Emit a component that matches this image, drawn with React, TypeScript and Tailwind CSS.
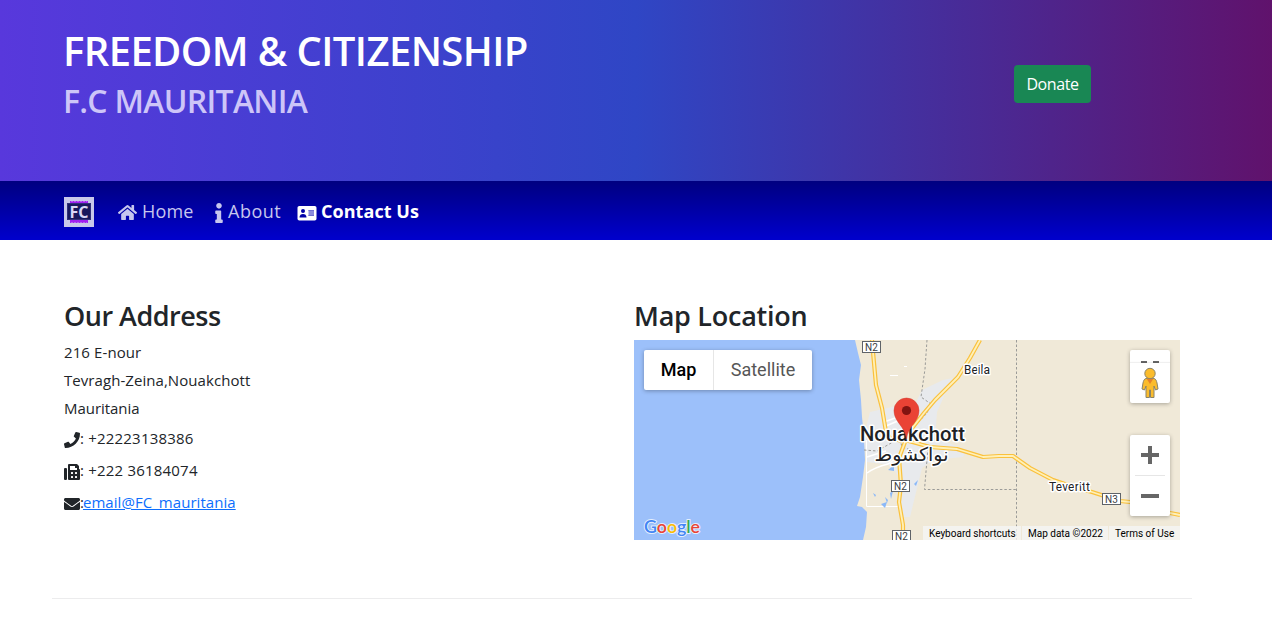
import { FaEnvelope, FaFax, FaHome, FaInfo, FaPhone } from "react-icons/fa";

function Logo() {
  return (
    <svg viewBox="0 0 30 30" className="h-[30px] w-[30px] shrink-0" aria-label="FC">
      <rect width="30" height="30" fill="#c8c8ea" />
      <rect x="6" y="4" width="18" height="3" fill="#a020f0" />
      <path d="M7 4.500h16" stroke="#b860f0" strokeDasharray="2 1" />
      <rect x="6" y="23" width="18" height="3" fill="#a020f0" />
      <path d="M7 25.500h16" stroke="#b860f0" strokeDasharray="2 1" />
      <rect x="3.5" y="6.5" width="23" height="16" fill="#18185c" stroke="#30307a" />
      <text x="15" y="20.500" textAnchor="middle" textLength="19" lengthAdjust="spacingAndGlyphs" fontSize="16.500" fontWeight="700" fill="#d8d8f6" className="font-['Open_Sans',sans-serif]">FC</text>
    </svg>
  );
}

function ContactCard() {
  return (
    <svg viewBox="0 0 20 20" className="mt-px h-5 w-5 shrink-0">
      <rect x="0.500" y="3" width="19" height="14.500" rx="1.800" fill="#fff" />
      <circle cx="6" cy="8" r="2" fill="#0000a8" />
      <path d="M2.500 14.500C2.500 12 4 11 6 11S9.500 12 9.500 14.500Z" fill="#0000a8" />
      <rect x="11.500" y="7" width="5.500" height="6" fill="#8c8cdc" />
      <path d="M11.500 7.500H17M11.500 12.500H17" stroke="#7070d0" />
    </svg>
  );
}

const roads = [
  "M238 0L239 12L242 45L248 68L252 92L256 98L268 101",
  "M346 0L336 18L324 37L312 49L301 60L290 73L279 87L271 102L265 118L267 145L265 162L269 185L269 200",
  "M271 100L282 103L296 107L323 109L349 117L365 116L379 116L386 121L396 128L419 140L440 147L458 152L486 161L496 162L515 167L536 173L546 175",
];

function Shield({ x, y, label }: { x: number; y: number; label: string }) {
  return (
    <g>
      <rect x={x + 0.5} y={y + 0.5} width="18" height="11" fill="#fff" stroke="#5f6368" />
      <text x={x + 9.5} y={y + 9.5} textAnchor="middle" fontSize="10" fill="#3c4043">{label}</text>
    </g>
  );
}

function MapDrawing() {
  return (
    <svg viewBox="0 0 546 200" className="block h-[200px] w-[546px] font-[Roboto,sans-serif]">
      <rect width="546" height="200" fill="#f0e9d8" />
      <path d="M0 0H221L224 13L227 25L225 40L227 60L228 77L230 97L231 120L229 137L226 157L223 166L228 167L233 172L232 187L229 200H0Z" fill="#9cc0fa" />
      <path d="M236 72L258 67L282 62L288 50L309 40L319 38L312 52L303 72L301 98L333 110L329 117L299 120L288 128L276 177L266 177L266 138L256 125L233 122L229 92L232 88Z" fill="#e8eaed" />
      <g fill="none" stroke="#fff" strokeWidth="1.5">
        <path d="M232.500 100V166.500H264" strokeWidth="1" />
        <path d="M233 133C240 128 246 126 254 124L264 117M233 117L252 111M250 82L264 77M252 86L266 80" />
        <path d="M256 35.500H264M270 26.500H273" strokeWidth="1" />
      </g>
      <path d="M254 130L260 125V131ZM239 153L242 155L241 157ZM247 164L253 162L251 168ZM256 153L259 151L257 159ZM280 144L284 140L282 146ZM251 157L254 160L253 163Z" fill="#8ab8f8" />
      <g fill="none" stroke="#9b9b98" strokeWidth="1" strokeDasharray="2.500 2">
        <path d="M293 0L291 29L287 57L297 64L293 73L280 87L266 99L268 107L277 110" />
        <path d="M230 110L243 111L259 102M294 108L290.500 149.500H382" />
        <path d="M382.500 0V200" />
      </g>
      {roads.map((d) => (
        <g key={d} fill="none" strokeLinejoin="round">
          <path d={d} stroke="#fac13c" strokeWidth="4.200" />
          <path d={d} stroke="#fff0b8" strokeWidth="1.800" />
        </g>
      ))}
      <Shield x={228} y={1} label="N2" />
      <Shield x={257} y={140} label="N2" />
      <Shield x={258} y={190} label="N2" />
      <Shield x={468} y={153} label="N3" />
      <g stroke="#fff" strokeWidth="3" paintOrder="stroke" strokeLinejoin="round" fill="#202124">
        <text x="330" y="34" fontSize="12" textLength="26">Beila</text>
        <text x="415" y="151" fontSize="12" textLength="41">Teveritt</text>
        <text x="226" y="101" fontSize="20" fontWeight="500" textLength="105" lengthAdjust="spacingAndGlyphs">Nouakchott</text>
        <text x="277.500" y="121" fontSize="19" textAnchor="middle" textLength="74" lengthAdjust="spacingAndGlyphs" className="font-['DejaVu_Sans',sans-serif]">نواكشوط</text>
      </g>
      <path d="M272.500 99C271 86 260 82 260 70.500A12.500 12.500 0 0 1 285 70.500C285 82 274 86 272.500 99Z" fill="#ea4335" stroke="#d33b2f" strokeWidth=".5" />
      <circle cx="272.500" cy="70.500" r="4.600" fill="#811411" />
      <g fontSize="18" fontWeight="600" stroke="#e4eefc" strokeWidth="2" paintOrder="stroke" className="font-[Lato,sans-serif]">
        <text x="10" y="192.500" textLength="56" lengthAdjust="spacingAndGlyphs">
          <tspan fill="#4285f4">G</tspan><tspan fill="#ea4335">o</tspan><tspan fill="#fbbc04">o</tspan><tspan fill="#4285f4">g</tspan><tspan fill="#34a853">l</tspan><tspan fill="#ea4335">e</tspan>
        </text>
      </g>
    </svg>
  );
}

function Pegman() {
  return (
    <svg viewBox="0 0 18 32" className="h-8 w-[18px]">
      <path d="M5 11.500H13C15 12 15.500 14 16 16L17 22L14.500 23L13 19V30.500H9.500V23H8.500V30.500H5V19L3.500 23L1 22L2 16C2.500 14 3 12 5 11.500Z" fill="#fbbc2c" stroke="#8b8468" />
      <path d="M5.500 11.500H12.500L9 17Z" fill="#e5812b" />
      <circle cx="9" cy="6.500" r="5.200" fill="#fbbc2c" stroke="#8b8468" />
    </svg>
  );
}

function GoogleMap() {
  return (
    <div className="relative h-[200px] w-[546px] overflow-hidden font-[Roboto,sans-serif]">
      <MapDrawing />
      <div className="absolute left-[10px] top-[10px] flex h-10 rounded-[2px] bg-white text-[18px] leading-10 shadow-[0_1px_4px_rgba(0,0,0,0.3)]">
        <button className="w-[70px] border-r border-[#e6e6e6] font-medium text-black">Map</button>
        <button className="w-[98px] text-[#565656]">Satellite</button>
      </div>
      <div className="absolute right-[10px] top-[10px] flex h-[53px] w-10 flex-col rounded-[2px] bg-white shadow-[0_1px_4px_rgba(0,0,0,0.3)]">
        <div className="flex h-[13px] items-end justify-center gap-[6px]">
          <span className="h-[2px] w-[6px] bg-[#666]" />
          <span className="h-[2px] w-[6px] bg-[#666]" />
        </div>
        <div className="flex h-10 items-center justify-center shadow-[0_-1px_1px_rgba(0,0,0,0.06)]"><Pegman /></div>
      </div>
      <div className="absolute right-[10px] top-[95px] flex h-[81px] w-10 flex-col items-center rounded-[2px] bg-white shadow-[0_1px_4px_rgba(0,0,0,0.3)]">
        <svg viewBox="0 0 40 40" className="h-10 w-10"><path d="M11 20H29M20 11V29" stroke="#666" strokeWidth="4" /></svg>
        <span className="h-px w-[30px] bg-[#e6e6e6]" />
        <svg viewBox="0 0 40 40" className="h-10 w-10"><path d="M11 20H29" stroke="#666" strokeWidth="4" /></svg>
      </div>
      <div className="absolute bottom-0 right-0 flex h-[14px] gap-px whitespace-nowrap text-[10px] leading-[15px] text-black">
        <span className="w-[98px] bg-[#f5f5f5]/80 pl-[6px]">Keyboard shortcuts</span>
        <span className="w-[86px] bg-[#f5f5f5]/80 pl-[6px]">Map data ©2022</span>
        <span className="w-[71px] bg-[#f5f5f5]/80 pl-[6px]">Terms of Use</span>
      </div>
    </div>
  );
}

export default function App() {
  return (
    <div className="h-[636px] overflow-hidden bg-white font-['Open_Sans',sans-serif] text-[#212529]">
      <header className="flex h-[181px] justify-between bg-[linear-gradient(90deg,#5838dc_0%,#2f46c5_50%,#60126c_100%)] pl-16 pr-[181px]">
        <div className="-ml-px pt-[27px] font-semibold">
          <h1 className="text-[40px] leading-[48px] tracking-[-0.6px] text-white">FREEDOM &amp; CITIZENSHIP</h1>
          <h2 className="mt-[7px] text-[32px] leading-[38px] tracking-[-0.72px] text-[#cdc5f8]">F.C MAURITANIA</h2>
        </div>
        <button className="mt-[65px] h-[38px] w-[77px] rounded-[4px] bg-[#198754] text-[16px] tracking-[-0.4px] text-white">Donate</button>
      </header>
      <nav className="flex h-[59px] items-center bg-[linear-gradient(#000080,#0000cd)] pl-16 pt-[3px] text-[18px] text-[#c6c6ee]">
        <Logo />
        <a className="ml-6 flex w-[96px] items-center gap-[5px]"><FaHome className="mt-px size-[19px] shrink-0" /><span className="-mt-[2px] tracking-[0.15px]">Home</span></a>
        <a className="flex w-[83px] items-center gap-[4px]"><FaInfo className="mt-px h-5 w-[10px] shrink-0" /><span className="-mt-[2px] tracking-[0.5px]">About</span></a>
        <a className="flex items-center gap-[4px] font-bold text-white"><ContactCard /><span className="-mt-[2px] whitespace-nowrap tracking-[0.05px]">Contact Us</span></a>
      </nav>
      <main className="ml-[52px] flex h-[359px] w-[1140px] border-b border-[#ececed] pl-3 pt-[59px]">
        <section className="w-[570px]">
          <h3 className="text-[27px] font-semibold leading-[34px] tracking-[-0.5px]">Our Address</h3>
          <address className="pt-[5px] text-[15px] not-italic">
            <p className="h-7 leading-7"><span className="tracking-[0.1px]">216 E-nour</span></p>
            <p className="h-7 leading-7"><span className="tracking-[0.06px]">Tevragh-Zeina,Nouakchott</span></p>
            <p className="h-7 leading-7"><span className="tracking-[-0.05px]">Mauritania</span></p>
            <p className="flex h-8 items-center"><FaPhone className="mt-[3px] size-4 shrink-0" /><span className="tracking-[0.2px]">: +22223138386</span></p>
            <p className="flex h-8 items-center"><FaFax className="mt-[3px] size-4 shrink-0" /><span className="tracking-[0.2px]">: +222 36184074</span></p>
            <p className="flex h-8 items-center"><FaEnvelope className="mt-[3px] size-4 shrink-0" /><span className="-mr-px">:</span><a className="tracking-[0.05px] text-[#0d6efd] underline">email@FC_mauritania</a></p>
          </address>
        </section>
        <section>
          <h3 className="mb-[7px] text-[27px] font-semibold leading-[34px] tracking-[-0.25px]">Map Location</h3>
          <GoogleMap />
        </section>
      </main>
    </div>
  );
}
